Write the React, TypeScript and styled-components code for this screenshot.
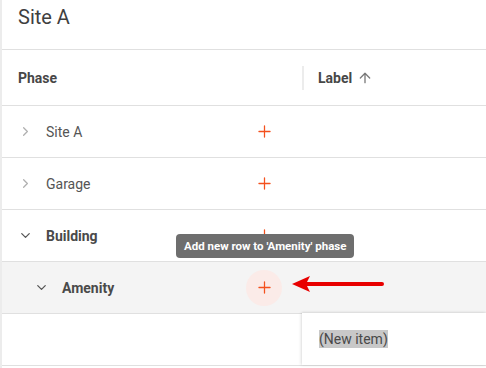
import React from 'react'
import styled, { createGlobalStyle } from 'styled-components'
import { ArrowUp, ChevronDown, ChevronRight, Plus } from 'lucide-react'

const GlobalStyle = createGlobalStyle`
  html, body {
    margin: 0;
    padding: 0;
    background: #ffffff;
    font-family: Roboto, 'Liberation Sans', Arial, sans-serif;
  }
  * {
    box-sizing: border-box;
  }
`

interface PhaseRow {
  label: string
  level: number
  expanded: boolean
  active?: boolean
}

const rows: PhaseRow[] = [
  { label: 'Site A', level: 0, expanded: false },
  { label: 'Garage', level: 0, expanded: false },
  { label: 'Building', level: 0, expanded: true },
  { label: 'Amenity', level: 1, expanded: true, active: true }
]

const App: React.FC = () => {
  return (
    <>
      <GlobalStyle />
      <Page>
        <TitleBar>Site A</TitleBar>

        <HeaderRow>
          <HeaderCell>Phase</HeaderCell>
          <HeaderCell $divider>
            Label
            <ArrowUp size={16} strokeWidth={2} color='#7a7a7a' />
          </HeaderCell>
        </HeaderRow>

        {rows.map(row => (
          <Row key={row.label} $active={row.active}>
            <PhaseCell $level={row.level}>
              <Toggle $expanded={row.expanded}>
                {row.expanded ? <ChevronDown size={15} strokeWidth={2} /> : <ChevronRight size={15} strokeWidth={2} />}
              </Toggle>
              <PhaseName $bold={row.expanded}>{row.label}</PhaseName>
              <AddButton $hover={row.active}>
                <Plus size={19} strokeWidth={1.6} />
                {row.active && (
                  <>
                    <Tooltip>Add new row to 'Amenity' phase</Tooltip>
                    <Pointer width='96' height='20' viewBox='0 0 96 20'>
                      <path d='M14 10 L90 10' stroke='#e80000' strokeWidth='4' strokeLinecap='round' />
                      <path d='M0 10 L18 2 L14 10 L18 18 Z' fill='#e80000' />
                    </Pointer>
                  </>
                )}
              </AddButton>
            </PhaseCell>
            <LabelCell />
          </Row>
        ))}

        <Row>
          <PhaseCell $level={0} />
          <LabelCell>
            <Editor>
              <Selected>(New item)</Selected>
            </Editor>
          </LabelCell>
        </Row>
      </Page>
    </>
  )
}

const Page = styled.div`
  width: 486px;
  height: 368px;
  border-left: 2px solid #ececec;
  overflow: hidden;
  display: flex;
  flex-direction: column;
`

const TitleBar = styled.div`
  height: 50px;
  padding: 5px 0 0 16px;
  font-size: 20px;
  color: #3f3f3f;
  border-bottom: 1px solid #e0e0e0;
  flex-shrink: 0;
`

const HeaderRow = styled.div`
  display: grid;
  grid-template-columns: 300px 1fr;
  height: 56px;
  border-bottom: 1px solid #e0e0e0;
  flex-shrink: 0;
`

const HeaderCell = styled.div<{ $divider?: boolean }>`
  display: flex;
  align-items: center;
  gap: 5px;
  padding-left: 16px;
  font-size: 14px;
  font-weight: 700;
  color: #474747;
  position: relative;

  ${p =>
    p.$divider &&
    `
    &::before {
      content: '';
      position: absolute;
      left: 0;
      top: 16px;
      bottom: 15px;
      width: 2px;
      background: #ececec;
    }
  `}
`

const Row = styled.div<{ $active?: boolean }>`
  display: grid;
  grid-template-columns: 300px 1fr;
  height: 52px;
  border-bottom: 1px solid #e0e0e0;
  background: ${p => (p.$active ? '#f4f4f4' : '#ffffff')};
  flex-shrink: 0;
  position: relative;
`

const PhaseCell = styled.div<{ $level: number }>`
  display: flex;
  align-items: center;
  padding-left: ${p => 18 + p.$level * 16}px;
  padding-right: 20px;
`

const Toggle = styled.span<{ $expanded: boolean }>`
  display: flex;
  width: 28px;
  margin-left: -2px;
  color: ${p => (p.$expanded ? '#555555' : '#b0b0b0')};
`

const PhaseName = styled.span<{ $bold: boolean }>`
  font-size: 14px;
  font-weight: ${p => (p.$bold ? 700 : 400)};
  color: ${p => (p.$bold ? '#4a4a4a' : '#555555')};
`

const AddButton = styled.span<{ $hover?: boolean }>`
  position: relative;
  margin-left: auto;
  width: 36px;
  height: 36px;
  border-radius: 50%;
  display: flex;
  align-items: center;
  justify-content: center;
  color: #f4511e;
  background: ${p => (p.$hover ? '#fbebe8' : 'transparent')};
`

const Tooltip = styled.span`
  position: absolute;
  left: -70px;
  top: -36px;
  height: 24px;
  padding: 0 8px;
  display: flex;
  align-items: center;
  white-space: nowrap;
  border-radius: 4px;
  background: #6e6e6e;
  color: #ffffff;
  font-size: 11.5px;
  font-weight: 700;
`

const Pointer = styled.svg`
  position: absolute;
  left: 46px;
  top: 4px;
`

const LabelCell = styled.div`
  position: relative;
`

const Editor = styled.div`
  position: absolute;
  left: 0;
  top: -1px;
  right: 0;
  bottom: 0;
  background: #ffffff;
  box-shadow: -1px 0 3px rgba(0, 0, 0, 0.12), 0 -1px 2px rgba(0, 0, 0, 0.06);
  display: flex;
  align-items: center;
  padding-left: 17px;
`

const Selected = styled.span`
  font-size: 14px;
  color: #484848;
  background: #c8c8c8;
  line-height: 18px;
`

export default App
